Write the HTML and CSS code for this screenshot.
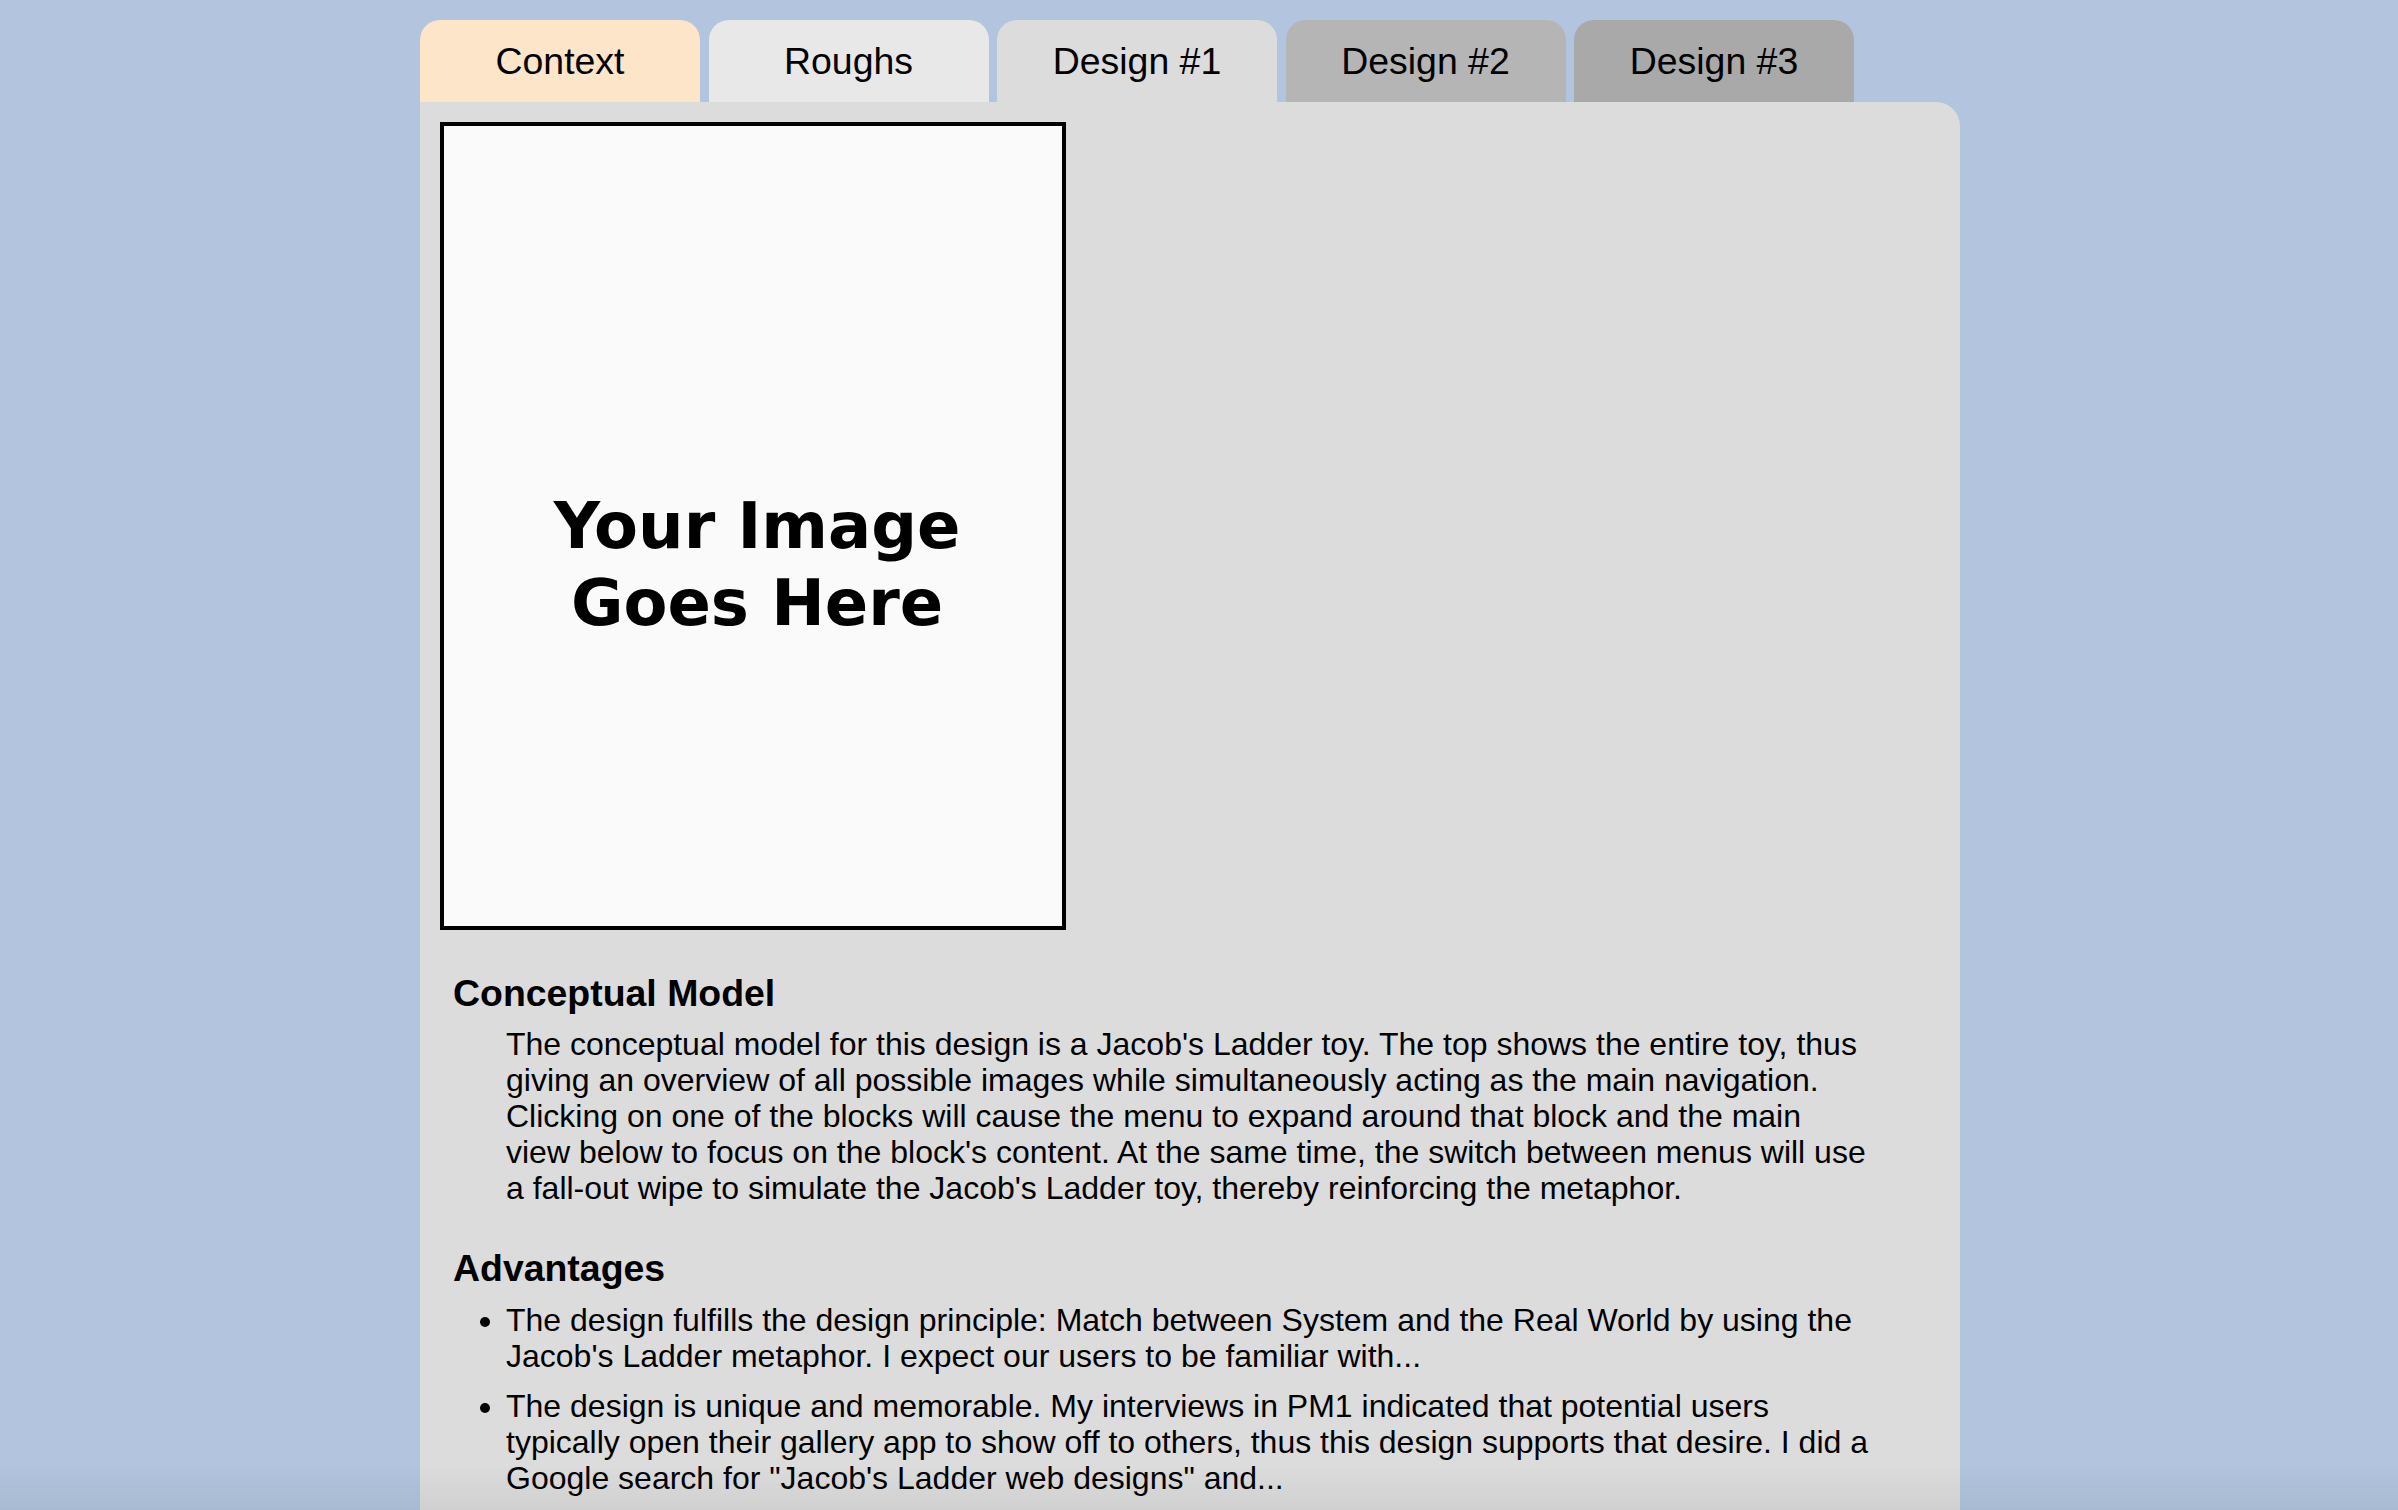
FILE: index.html
```html
<!DOCTYPE html>
<html lang="en">

<head>
  <meta charset="UTF-8">
  <meta name="viewport" content="width=device-width, initial-scale=1.0">
  <title>Design #1</title>
  <link rel="stylesheet" href="styles.css">
</head>

<body>
  <div class="container">
    <!-- Tab strip -->
    <nav class="tabs">
      <a class="tab tab-context" href="#">Context</a>
      <a class="tab tab-roughs" href="#">Roughs</a>
      <a class="tab tab-design1" href="#">Design #1</a>
      <a class="tab tab-design2" href="#">Design #2</a>
      <a class="tab tab-design3" href="#">Design #3</a>
    </nav>

    <div class="panel">
      <div class="placeholder">
        <span>Your Image<br>Goes Here</span>
      </div>

      <div class="writeup">
        <h3>Conceptual Model</h3>
        <p>The conceptual model for this design is a Jacob's Ladder toy. The top shows the entire toy, thus giving an overview of all possible images while simultaneously acting as the main navigation. Clicking on one of the blocks will cause the menu to expand around that block and the main view below to focus on the block's content. At the same time, the switch between menus will use a fall-out wipe to simulate the Jacob's Ladder toy, thereby reinforcing the metaphor.</p>

        <h3>Advantages</h3>
        <ul>
          <li>The design fulfills the design principle: Match between System and the Real World by using the Jacob's Ladder metaphor. I expect our users to be familiar with...</li>
          <li>The design is unique and memorable. My interviews in PM1 indicated that potential users typically open their gallery app to show off to others, thus this design supports that desire. I did a Google search for "Jacob's Ladder web designs" and...</li>
        </ul>
      </div>
    </div>
  </div>
</body>

</html>
```

FILE: styles.css
```css
/* General Reset */
* {
  margin: 0;
  padding: 0;
  box-sizing: border-box;
}

body {
  font-family: 'Liberation Sans', Arial, sans-serif;
  background-color: #b2c4de;
  color: #000;
  height: 100vh;
  overflow: hidden;
}

/* soft shade along the bottom of the window */
body::after {
  content: "";
  position: fixed;
  left: 0;
  right: 0;
  bottom: 0;
  height: 45px;
  background: linear-gradient(to bottom, rgba(0, 0, 0, 0), rgba(0, 0, 0, 0.05));
  pointer-events: none;
}

.container {
  width: 1540px;
  margin-left: 420px;
  padding-top: 20px;
}

/* Tabs */
.tabs {
  display: flex;
  gap: 8.5px;
}

.tab {
  width: 280px;
  height: 82px;
  display: flex;
  align-items: center;
  justify-content: center;
  border-radius: 20px 20px 0 0;
  font-size: 37.44px;
  color: #000;
  text-decoration: none;
}

.tab-context {
  background-color: #fde5c9;
}

.tab-roughs {
  background-color: #e8e8e8;
}

.tab-design1 {
  background-color: #dcdcdc;
}

.tab-design2 {
  background-color: #b5b5b5;
}

.tab-design3 {
  background-color: #a9a9a9;
}

/* Main panel */
.panel {
  background-color: #dcdcdc;
  border-radius: 0 24px 0 0;
  padding: 20px 90px 0 20px;
  height: calc(100vh - 102px);
  overflow: hidden;
}

.placeholder {
  width: 626px;
  height: 808px;
  border: 4px solid #000;
  background-color: #fafafa;
  padding: 362px 0 0 8px;
  text-align: center;
  font-family: 'DejaVu Sans', Verdana, sans-serif;
  font-weight: bold;
  font-size: 64px;
  line-height: 77px;
}

/* Text below the image */
.writeup {
  padding-left: 13px;
}

.writeup h3 {
  font-size: 37.44px;
  font-weight: bold;
  line-height: 43px;
  margin-top: 42px;
}

.writeup p {
  font-size: 32px;
  line-height: 36px;
  margin: 11px 0 0 53px;
}

.writeup h3 + ul {
  margin-top: 12px;
}

.writeup p + h3 {
  margin-top: 41px;
}

.writeup ul {
  padding-left: 53px;
  font-size: 32px;
  line-height: 36px;
}

.writeup li {
  margin-bottom: 14px;
}
```
